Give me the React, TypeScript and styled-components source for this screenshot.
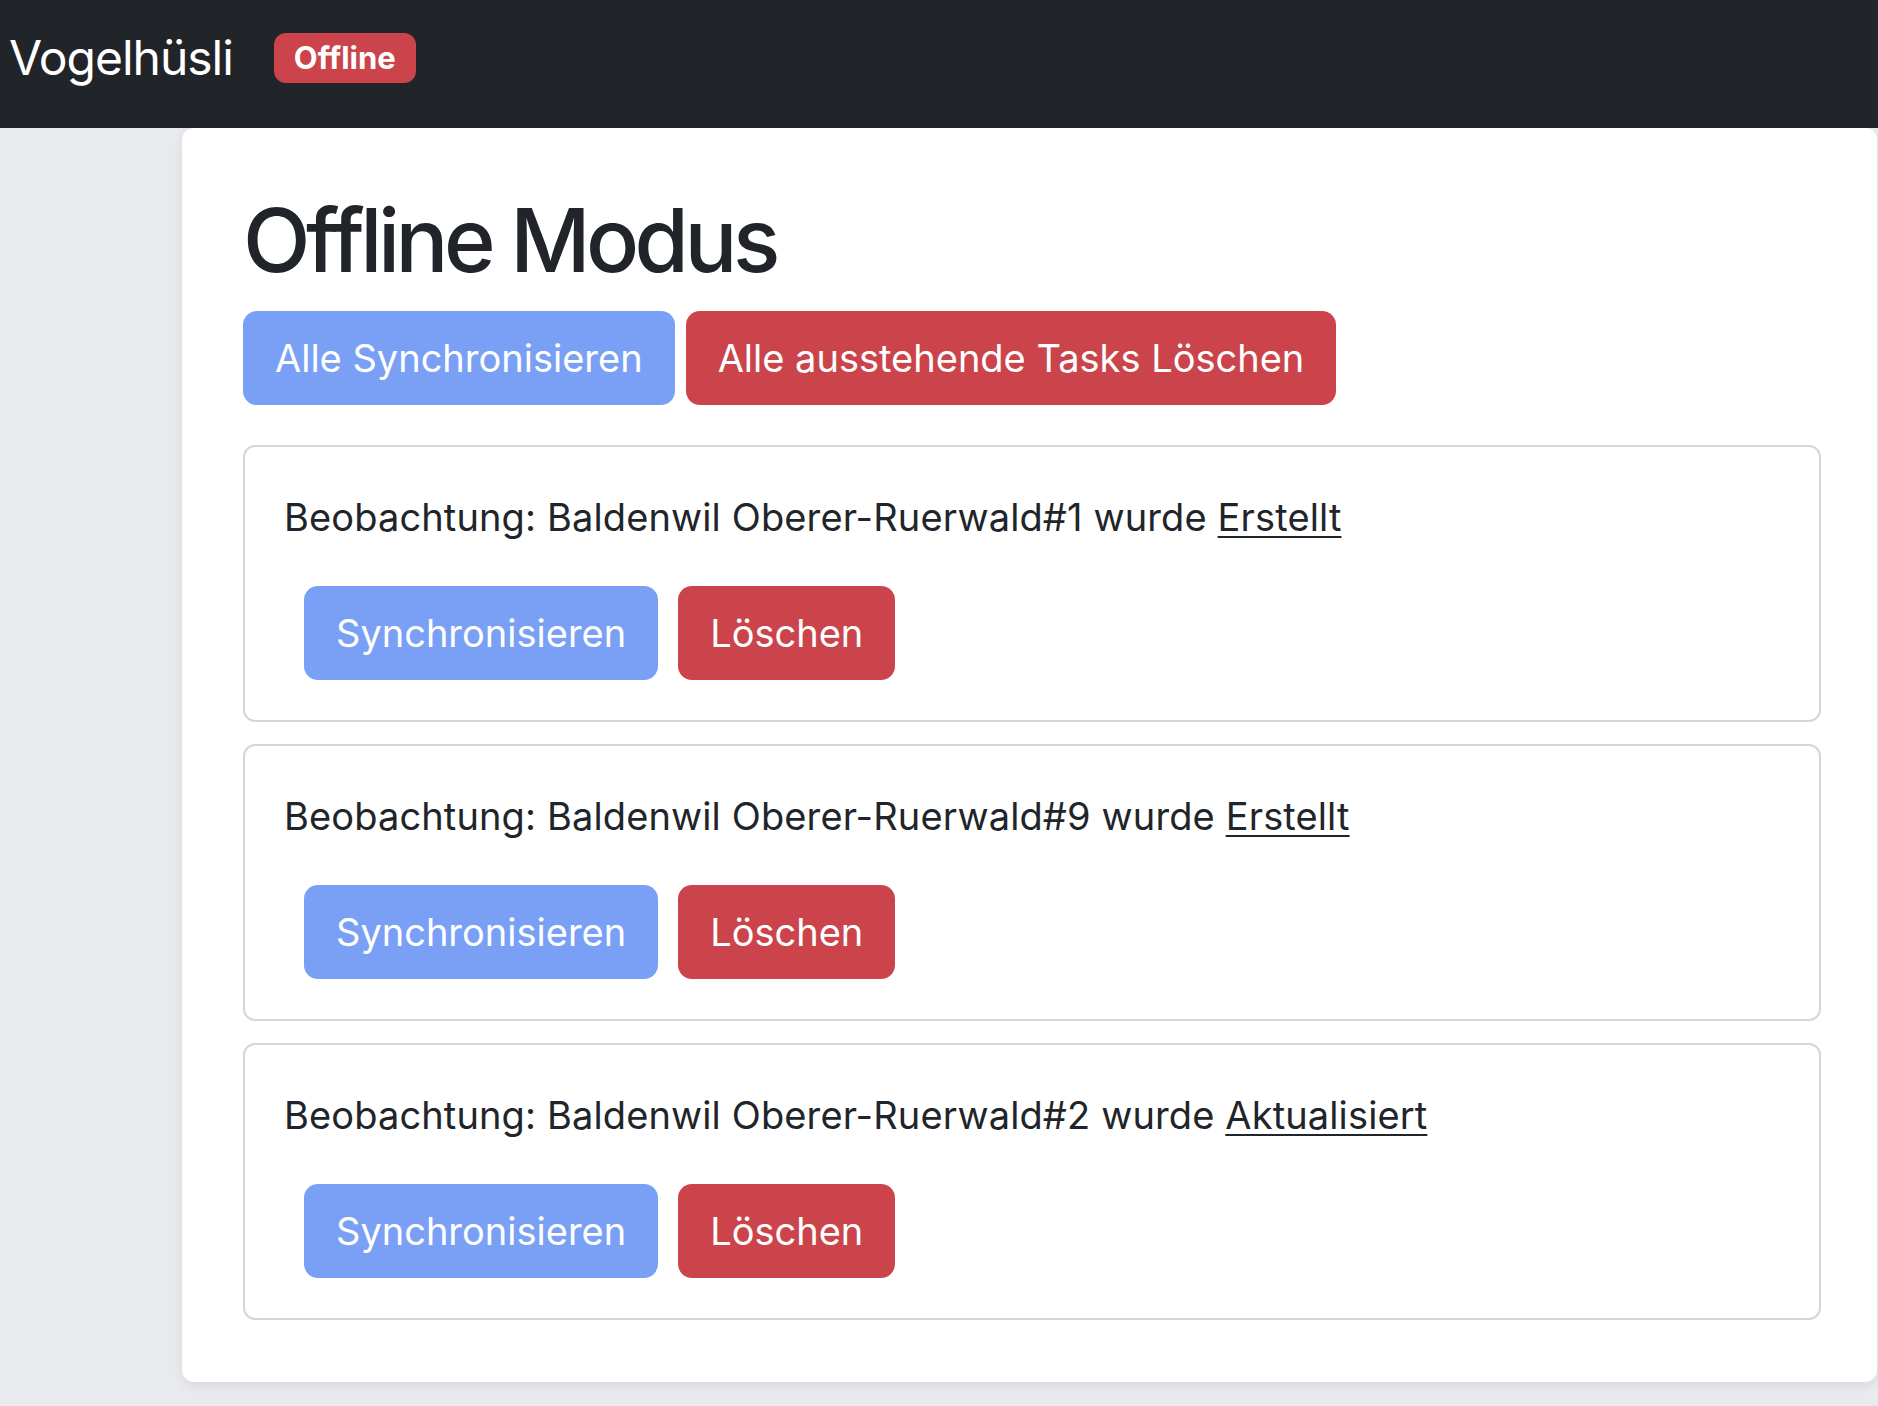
import React from "react";
import styled, { createGlobalStyle } from "styled-components";

const GlobalStyle = createGlobalStyle`
  html, body {
    margin: 0;
    padding: 0;
    background: #e9eaee;
    font-family: Inter, "Noto Sans", "Liberation Sans", sans-serif;
    color: #212529;
  }
  * { box-sizing: border-box; }
`;

const Header = styled.header`
  height: 128px;
  background: #212529;
  display: flex;
  align-items: flex-start;
  gap: 41px;
  padding: 33px 0 0 9px;
`;

const Brand = styled.span`
  font-size: 48px;
  line-height: 50px;
  color: #ffffff;
  letter-spacing: -1px;
`;

const Badge = styled.span`
  background: #cb444b;
  color: #ffffff;
  font-weight: 700;
  font-size: 31px;
  line-height: 32px;
  padding: 9px 20px;
  border-radius: 12px;
`;

const Page = styled.main`
  display: flex;
  padding-left: 182px;
  padding-bottom: 25px;
`;

const Panel = styled.section`
  flex: 1;
  margin-right: 1px;
  background: #ffffff;
  border-radius: 12px;
  box-shadow: 0 4px 12px rgba(0, 0, 0, 0.07);
  padding: 60px 56px 62px 61px;
`;

const Title = styled.h1`
  margin: 0 0 17px;
  font-size: 88px;
  line-height: 1.2;
  font-weight: 500;
  letter-spacing: -4.5px;
`;

const Toolbar = styled.div`
  display: flex;
  gap: 11px;
  margin-bottom: 40px;
`;

const Button = styled.button<{ $variant: "primary" | "danger" }>`
  border: 0;
  border-radius: 14px;
  padding: 17px 32px;
  font-family: inherit;
  font-size: 38px;
  line-height: 60px;
  color: #ffffff;
  background: ${(p) => (p.$variant === "primary" ? "#7aa0f6" : "#cb444b")};
  cursor: pointer;
`;

const TaskList = styled.div`
  display: flex;
  flex-direction: column;
  gap: 22px;
`;

const Card = styled.article`
  border: 2px solid #d6d6d6;
  border-radius: 12px;
  padding: 42px 40px 40px 39px;
`;

const CardText = styled.p`
  margin: 0 0 40px;
  font-size: 38px;
  line-height: 57px;
  letter-spacing: 0.13px;
`;

const Action = styled.a`
  color: #212529;
  text-decoration: underline;
  text-decoration-thickness: 2px;
  text-underline-offset: 5px;
`;

const CardActions = styled.div`
  display: flex;
  gap: 20px;
  padding-left: 20px;
`;

const tasks = [
  { name: "Baldenwil Oberer-Ruerwald#1", action: "Erstellt" },
  { name: "Baldenwil Oberer-Ruerwald#9", action: "Erstellt" },
  { name: "Baldenwil Oberer-Ruerwald#2", action: "Aktualisiert" },
];

export default function App() {
  return (
    <>
      <GlobalStyle />
      <Header>
        <Brand>Vogelhüsli</Brand>
        <Badge>Offline</Badge>
      </Header>
      <Page>
        <Panel>
          <Title>Offline Modus</Title>
          <Toolbar>
            <Button $variant="primary">Alle Synchronisieren</Button>
            <Button $variant="danger">Alle ausstehende Tasks Löschen</Button>
          </Toolbar>
          <TaskList>
            {tasks.map((t) => (
              <Card key={t.name}>
                <CardText>
                  Beobachtung: {t.name} wurde <Action href="#">{t.action}</Action>
                </CardText>
                <CardActions>
                  <Button $variant="primary">Synchronisieren</Button>
                  <Button $variant="danger">Löschen</Button>
                </CardActions>
              </Card>
            ))}
          </TaskList>
        </Panel>
      </Page>
    </>
  );
}
